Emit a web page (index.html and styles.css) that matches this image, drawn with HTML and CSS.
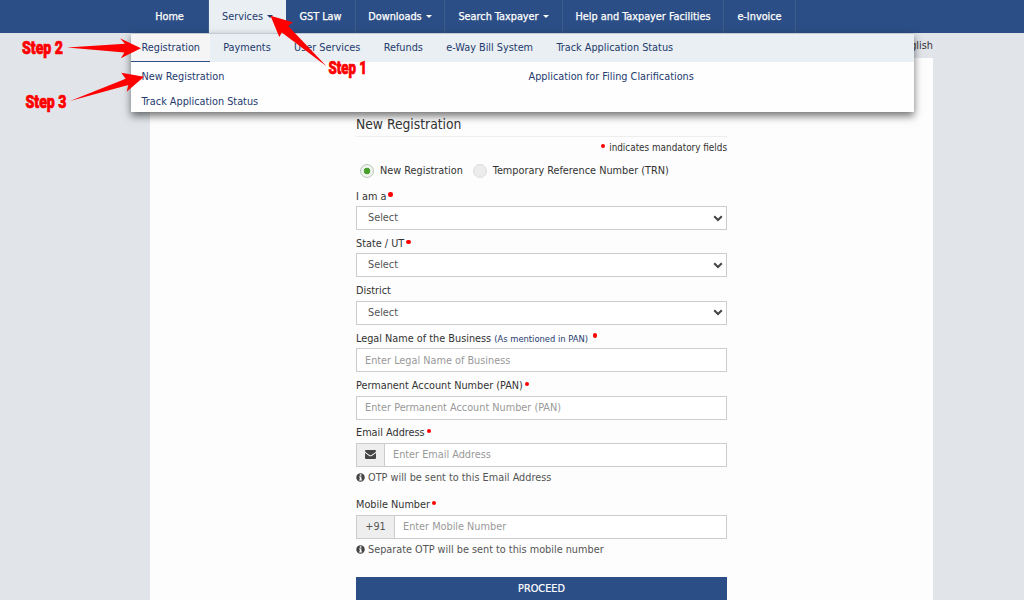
FILE: index.html
```
<!DOCTYPE html>
<html lang="en">
<head>
<meta charset="utf-8">
<title>New Registration</title>
<link rel="stylesheet" href="styles.css">
</head>
<body>
<header class="topbar">
  <nav class="nav">
    <a class="nav-item home">Home</a>
    <a class="nav-item services active">Services<i class="caret"></i></a>
    <a class="nav-item law">GST Law</a>
    <a class="nav-item downloads">Downloads<i class="caret"></i></a>
    <a class="nav-item search">Search Taxpayer<i class="caret"></i></a>
    <a class="nav-item help">Help and Taxpayer Facilities</a>
    <a class="nav-item invoice">e-Invoice</a>
  </nav>
</header>
<div class="language">English</div>
<main class="content">
  <form class="form">
    <h1 class="title">New Registration</h1>
    <p class="mandatory"><i class="dot"></i>indicates mandatory fields</p>
    <div class="radios">
      <span class="radio checked"></span><span class="radio-label">New Registration</span>
      <span class="radio"></span><span class="radio-label">Temporary Reference Number (TRN)</span>
    </div>
    <div class="field"><label class="label">I am a<i class="dot"></i></label>
      <div class="control select">Select<svg class="chevron" viewBox="0 0 10 7"><path d="M1.2 1.2 5 5 8.8 1.2"/></svg></div></div>
    <div class="field"><label class="label">State / UT<i class="dot"></i></label>
      <div class="control select">Select<svg class="chevron" viewBox="0 0 10 7"><path d="M1.2 1.2 5 5 8.8 1.2"/></svg></div></div>
    <div class="field"><label class="label">District</label>
      <div class="control select">Select<svg class="chevron" viewBox="0 0 10 7"><path d="M1.2 1.2 5 5 8.8 1.2"/></svg></div></div>
    <div class="field"><label class="label">Legal Name of the Business <small class="note">(As mentioned in PAN)</small><i class="dot spaced"></i></label>
      <div class="control input">Enter Legal Name of Business</div></div>
    <div class="field"><label class="label">Permanent Account Number (PAN)<i class="dot"></i></label>
      <div class="control input">Enter Permanent Account Number (PAN)</div></div>
    <div class="field with-hint"><label class="label">Email Address<i class="dot"></i></label>
      <div class="group"><span class="addon mail"><svg class="envelope" viewBox="0 0 11 9"><path d="M0 1.1Q0 0 1 0H10Q11 0 11 1.1 11 1.8 10 2.6L6.4 5Q5.5 5.6 4.6 5L1 2.6Q0 1.8 0 1.1ZM0 3 4.2 5.9Q5.5 6.7 6.8 5.9L11 3V8Q11 9 10 9H1Q0 9 0 8Z"/></svg></span><div class="control input">Enter Email Address</div></div>
      <p class="hint"><svg class="info" viewBox="0 0 10 10"><circle cx="5" cy="5" r="4.7"/><path d="M4.2 1.4H6V3H4.2ZM3.4 3.9H6V7.2H6.8V8.3H3.4V7.2H4.2V5H3.4Z"/></svg>OTP will be sent to this Email Address</p></div>
    <div class="field with-hint"><label class="label mobile">Mobile Number<i class="dot"></i></label>
      <div class="group"><span class="addon code">+91</span><div class="control input">Enter Mobile Number</div></div>
      <p class="hint"><svg class="info" viewBox="0 0 10 10"><circle cx="5" cy="5" r="4.7"/><path d="M4.2 1.4H6V3H4.2ZM3.4 3.9H6V7.2H6.8V8.3H3.4V7.2H4.2V5H3.4Z"/></svg>Separate OTP will be sent to this mobile number</p></div>
    <button class="proceed" type="button">PROCEED</button>
  </form>
</main>
<section class="dropdown">
  <nav class="tabs">
    <a class="tab current">Registration</a><a class="tab">Payments</a><a class="tab">User Services</a><a class="tab">Refunds</a><a class="tab">e-Way Bill System</a><a class="tab">Track Application Status</a>
  </nav>
  <div class="links">
    <a>New Registration</a><a>Application for Filing Clarifications</a>
    <a>Track Application Status</a>
  </div>
</section>
<svg class="annotations" viewBox="0 0 1024 600">
  <path d="M67 47.4 125 43.7 120 38.2 141 48.2 120.8 58.2 124.4 52.6Z"/>
  <path d="M70 101 125.7 78.7 121.3 72.7 144 76.8 126.7 91.7 128.3 85Z"/>
  <path d="M326.5 66.3 288.2 26 292.8 22.3 270.5 15.8 279.3 37 281.8 32.4Z"/>
  <text x="22" y="54" textLength="41" lengthAdjust="spacingAndGlyphs">Step 2</text>
  <text x="25.5" y="108" textLength="41" lengthAdjust="spacingAndGlyphs">Step 3</text>
  <text x="328.5" y="74" textLength="38.5" lengthAdjust="spacingAndGlyphs">Step 1</text>
</svg>
</body>
</html>
```
FILE: styles.css
```
* { box-sizing: border-box; }
body {
  margin: 0;
  height: 600px;
  overflow: hidden;
  position: relative;
  background: #e1e5ea;
  color: #333;
  font: 10.8px/14px "DejaVu Sans Condensed", "DejaVu Sans", sans-serif;
}
.topbar { height: 33px; background: #2c4e86; }
.nav { display: flex; height: 33px; padding-left: 131px; }
.nav-item {
  display: flex;
  align-items: center;
  justify-content: center;
  height: 33px;
  border-right: 1px solid #3d5b8b;
  color: #fff;
  -webkit-text-stroke: 0.25px currentColor;
}
.home { width: 78px; }
.services { width: 77px; }
.law { width: 70px; }
.downloads { width: 89px; }
.search { width: 118px; }
.help { width: 161px; }
.invoice { width: 72px; }
.active { background: #e9eff2; color: #243a6e; border-right: 0; -webkit-text-stroke: 0; }
.caret {
  margin-left: 4px;
  border: 3px solid transparent;
  border-top-color: currentColor;
  border-bottom: 0;
}
.language {
  height: 25px;
  width: 933px;
  padding-top: 6px;
  text-align: right;
}
.content {
  width: 783px;
  height: 542px;
  margin-left: 150px;
  padding-left: 206px;
  background: #fdfdfd;
}
.form { width: 371px; padding-top: 53px; }
.title {
  margin: 0;
  height: 26px;
  border-bottom: 1px solid #eee;
  font-size: 13.75px;
  font-weight: 400;
  line-height: 27px;
}
.mandatory {
  margin: 0;
  height: 20px;
  font-size: 9.85px;
  line-height: 21px;
  text-align: right;
}
.dot {
  display: inline-block;
  width: 4.4px;
  height: 4.4px;
  margin-left: 2px;
  border-radius: 50%;
  background: #f00;
  vertical-align: 3px;
}
.mandatory .dot { margin-right: 4px; }
.spaced { margin-left: 5px; vertical-align: 4px; }
.radios { display: flex; align-items: center; height: 28.5px; padding-left: 4px; }
.radio {
  width: 14px;
  height: 14px;
  border: 1px solid #ddd;
  border-radius: 50%;
  background: #ececec;
}
.checked {
  border-color: #b9c8b9;
  background: radial-gradient(circle, #4aa02c 0 3px, #eef3ee 3.6px);
}
.radio-label { margin: 0 10px 0 6px; }
.radio-label:last-child { margin-right: 0; }
.field { height: 47.4px; }
.with-hint { height: 72px; }
.label { display: block; height: 20.5px; line-height: 22px; white-space: nowrap; }
.note { font-size: 9.3px; line-height: 1; color: #243a6e; }
.control {
  display: flex;
  align-items: center;
  flex: 1;
  height: 24px;
  padding-top: 1px;
  border: 1px solid #ccc;
  background: #fff;
}
.select { justify-content: space-between; padding: 0 3px 0 11px; color: #555; }
.input { padding-left: 8px; color: #999; }
.chevron { width: 10px; height: 7px; fill: none; stroke: #444; stroke-width: 2; }
.group { display: flex; }
.addon {
  display: flex;
  align-items: center;
  justify-content: center;
  border: 1px solid #ccc;
  border-right: 0;
  background: #eee;
  color: #555;
}
.mail { width: 28px; }
.code { width: 38px; }
.envelope { width: 11px; height: 9px; fill: #444; }
.hint {
  display: flex;
  align-items: center;
  gap: 3px;
  height: 23px;
  margin: 0;
  color: #555;
}
.info { width: 9px; height: 9px; margin-bottom: 1px; fill: #444; }
.info path { fill: #fff; }
.proceed {
  display: block;
  width: 371px;
  height: 24px;
  margin-top: 10.5px;
  padding: 1px 0 0;
  border: 0;
  background: #2c4e86;
  color: #fff;
  font: inherit;
  -webkit-text-stroke: 0.2px #fff;
}
.dropdown {
  position: absolute;
  top: 33px;
  left: 131px;
  width: 783px;
  height: 79px;
  border-top: 1px solid #c3cad3;
  background: #fefefe;
  box-shadow: 0 4px 8px rgba(0, 0, 0, 0.55);
  color: #243a6e;
}
.tabs { display: flex; height: 28px; background: #e9eff2; }
.tab { padding: 0 11.7px; line-height: 28px; }
.current {
  margin-right: 1.5px;
  padding: 0 10.5px;
  width: 79px;
  border-bottom: 1px solid #2c4e86;
  background: #f5f5f5;
}
.links {
  display: grid;
  grid-template-columns: 387px 1fr;
  grid-auto-rows: 24.5px;
  padding: 3px 0 0 10.5px;
  line-height: 24px;
}
.annotations {
  position: absolute;
  inset: 0;
  width: 1024px;
  height: 600px;
  fill: #f00;
}
.annotations text {
  font: 900 18px Roboto, "Liberation Sans", sans-serif;
  stroke: #f00;
  stroke-width: 0.7px;
}
```
